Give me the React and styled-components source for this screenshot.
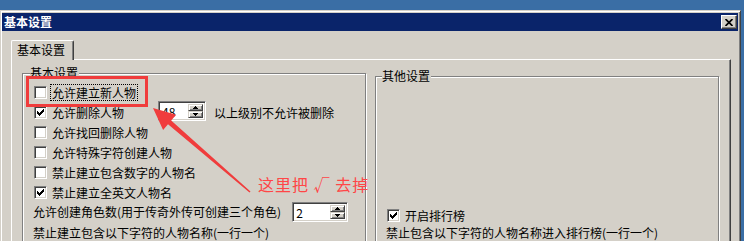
import React from "react";
import styled, { createGlobalStyle } from "styled-components";

const GlobalStyle = createGlobalStyle`
  html, body { margin: 0; padding: 0; }
  body {
    background: #3a6ea5;
    overflow: hidden;
    font-family: "Noto Sans CJK SC", "Noto Sans", sans-serif;
    font-size: 12px;
    color: #000;
  }
`;

const Desktop = styled.div`
  position: relative;
  width: 744px;
  height: 241px;
  overflow: hidden;
  padding-top: 10px;
  box-sizing: border-box;
`;

const Window = styled.div`
  width: 741px;
  height: 260px;
  box-sizing: border-box;
  background: #d4d0c8;
  border: 1px solid;
  border-color: #d4d0c8 #404040 #404040 #d4d0c8;
  box-shadow: inset 1px 1px #fff, inset -1px -1px #808080;
  padding: 2px 2px 0 1px;
  display: flex;
  flex-direction: column;
`;

const TitleBar = styled.div`
  height: 18px;
  flex-shrink: 0;
  background: #0a246a;
  color: #fff;
  font-weight: bold;
  display: flex;
  align-items: center;
  justify-content: space-between;
  padding: 0 1px 0 2px;
  line-height: 18px;
`;

const CloseButton = styled.div`
  width: 16px;
  height: 14px;
  box-sizing: border-box;
  background: #d4d0c8;
  border: 1px solid;
  border-color: #fff #404040 #404040 #fff;
  box-shadow: inset -1px -1px #808080;
  display: flex;
  align-items: center;
  justify-content: center;
`;

const Client = styled.div`
  flex: 1;
  padding: 9px 0 0 9px;
  display: flex;
  flex-direction: column;
`;

const TabStrip = styled.div`
  display: flex;
`;

const Tab = styled.div`
  position: relative;
  z-index: 1;
  width: 63px;
  height: 20px;
  margin-bottom: -1px;
  box-sizing: border-box;
  background: #d4d0c8;
  border-top: 1px solid #fff;
  border-left: 1px solid #fff;
  border-right: 1px solid #404040;
  box-shadow: inset -1px 0 #808080;
  border-radius: 2px 2px 0 0;
  padding-left: 5px;
  line-height: 17px;
`;

const Panel = styled.div`
  width: 720px;
  height: 200px;
  box-sizing: border-box;
  border-top: 1px solid #fff;
  border-left: 1px solid #fff;
  border-right: 1px solid #404040;
  border-bottom: 1px solid #404040;
  box-shadow: inset -1px -1px #808080;
  padding: 13px 10px 0 10px;
  display: flex;
  gap: 9px;
  align-items: flex-start;
`;

const Group = styled.div`
  position: relative;
  width: 344px;
  height: 200px;
  box-sizing: border-box;
  border: 1px solid #808080;
  box-shadow: inset 1px 1px #fff, 1px 1px #fff;
  margin-top: ${(p) => p.$mt || 0}px;
  padding: ${(p) => p.$pt}px 0 0 11px;
`;

const GroupLabel = styled.span`
  position: absolute;
  top: -8px;
  left: ${(p) => p.$left}px;
  line-height: 14px;
  padding-right: 1px;
  background: #d4d0c8;
`;

const Row = styled.div`
  display: flex;
  align-items: center;
  height: ${(p) => p.$h || 20}px;
`;

const CheckBox = styled.span`
  width: 13px;
  height: 13px;
  box-sizing: border-box;
  flex-shrink: 0;
  background: #fff;
  border: 1px solid;
  border-color: #808080 #fff #fff #808080;
  box-shadow: inset 1px 1px #404040, inset -1px -1px #d4d0c8;
  margin-right: 3px;
  display: flex;
`;

const ItemText = styled.span`
  line-height: 15px;
  padding: 0 1px;
  border: 1px ${(p) => (p.$focus ? "dotted #000" : "solid transparent")};
  white-space: nowrap;
`;

const PlainText = styled.span`
  margin-left: -1px;
  white-space: nowrap;
  line-height: 16px;
`;

const SideText = styled.span`
  margin-left: 8px;
  white-space: nowrap;
`;

const SpinBox = styled.div`
  display: flex;
  width: ${(p) => p.$w}px;
  height: 20px;
  box-sizing: border-box;
  background: #fff;
  border: 1px solid;
  border-color: #808080 #fff #fff #808080;
  box-shadow: inset 1px 1px #404040, inset -1px -1px #d4d0c8;
  padding: 2px 2px 2px 2px;
  margin-left: ${(p) => p.$ml}px;
  margin-top: ${(p) => p.$mt || 0}px;
  flex-shrink: 0;
`;

const SpinValue = styled.span`
  flex: 1;
  line-height: 16px;
  padding-left: 1px;
`;

const SpinButtons = styled.div`
  width: 15px;
  display: flex;
  flex-direction: column;
`;

const SpinBtn = styled.div`
  flex: 1;
  box-sizing: border-box;
  background: #d4d0c8;
  border: 1px solid;
  border-color: #d4d0c8 #404040 #404040 #d4d0c8;
  box-shadow: inset 1px 1px #fff, inset -1px -1px #808080;
  display: flex;
  align-items: center;
  justify-content: center;
`;

const RedBox = styled.div`
  position: absolute;
  left: 26px;
  top: 76px;
  width: 122px;
  height: 31px;
  box-sizing: border-box;
  border: 3px solid #f03c3c;
  pointer-events: none;
`;

const Note = styled.div`
  position: absolute;
  left: 258px;
  top: 175px;
  font-size: 16px;
  line-height: 18px;
  letter-spacing: 1px;
  color: #ff4646;
  white-space: pre;
`;

const ArrowLayer = styled.svg`
  position: absolute;
  left: 0;
  top: 0;
  pointer-events: none;
`;

const Check = () => (
  <svg width="11" height="11" viewBox="0 0 11 11" shapeRendering="crispEdges">
    <polygon
      fill="#000"
      points="2,4 3,4 3,5 4,5 4,6 5,6 5,5 6,5 6,4 7,4 7,3 8,3 8,2 9,2 9,5 8,5 8,6 7,6 7,7 6,7 6,8 5,8 5,9 4,9 4,8 3,8 3,7 2,7"
    />
  </svg>
);

const Tri = ({ up }) => (
  <svg width="5" height="3" viewBox="0 0 5 3" shapeRendering="crispEdges">
    <polygon fill="#000" points={up ? "2.5,0 5,3 0,3" : "0,0 5,0 2.5,3"} />
  </svg>
);

const Spin = ({ value, w, ml, mt }) => (
  <SpinBox $w={w} $ml={ml} $mt={mt}>
    <SpinValue>{value}</SpinValue>
    <SpinButtons>
      <SpinBtn>
        <Tri up />
      </SpinBtn>
      <SpinBtn>
        <Tri />
      </SpinBtn>
    </SpinButtons>
  </SpinBox>
);

const CheckItem = ({ checked, focus, children }) => (
  <>
    <CheckBox>{checked && <Check />}</CheckBox>
    <ItemText $focus={focus}>{children}</ItemText>
  </>
);

export default function App() {
  return (
    <>
      <GlobalStyle />
      <Desktop>
        <Window>
          <TitleBar>
            <span>基本设置</span>
            <CloseButton>
              <svg width="8" height="7" viewBox="0 0 8 7">
                <path d="M0.5 0 L7.5 7 M7.5 0 L0.5 7" stroke="#000" strokeWidth="1.7" />
              </svg>
            </CloseButton>
          </TitleBar>
          <Client>
            <TabStrip>
              <Tab>基本设置</Tab>
            </TabStrip>
            <Panel>
              <Group $pt={8}>
                <GroupLabel $left={7}>基本设置</GroupLabel>
                <Row>
                  <CheckItem focus>允许建立新人物</CheckItem>
                </Row>
                <Row>
                  <CheckItem checked>允许删除人物</CheckItem>
                  <Spin value="48" w={48} ml={32} mt={-3} />
                  <SideText>以上级别不允许被删除</SideText>
                </Row>
                <Row>
                  <CheckItem>允许找回删除人物</CheckItem>
                </Row>
                <Row>
                  <CheckItem>允许特殊字符创建人物</CheckItem>
                </Row>
                <Row>
                  <CheckItem>禁止建立包含数字的人物名</CheckItem>
                </Row>
                <Row>
                  <CheckItem checked>禁止建立全英文人物名</CheckItem>
                </Row>
                <Row>
                  <PlainText>允许创建角色数(用于传奇外传可创建三个角色)</PlainText>
                  <Spin value="2" w={56} ml={11} />
                </Row>
                <Row $h={22}>
                  <PlainText>禁止建立包含以下字符的人物名称(一行一个)</PlainText>
                </Row>
              </Group>
              <Group $pt={129} $mt={3}>
                <GroupLabel $left={6}>其他设置</GroupLabel>
                <Row $h={18}>
                  <CheckItem checked>开启排行榜</CheckItem>
                </Row>
                <Row $h={18}>
                  <PlainText>禁止包含以下字符的人物名称进入排行榜(一行一个)</PlainText>
                </Row>
              </Group>
            </Panel>
          </Client>
        </Window>

        <RedBox />
        <ArrowLayer width="744" height="241" viewBox="0 0 744 241">
          <polygon
            fill="#f03c3c"
            points="153,108 176.2,114.8 171.2,120.5 250.5,191.4 249.5,192.6 168,124.3 163.1,130"
          />
        </ArrowLayer>
        <Note>这里把 √ 去掉</Note>
      </Desktop>
    </>
  );
}
